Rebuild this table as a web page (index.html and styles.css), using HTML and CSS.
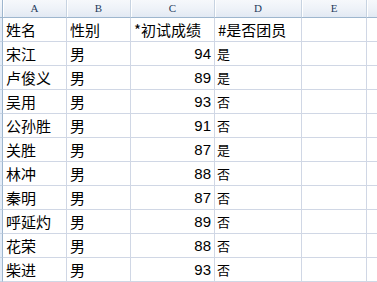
FILE: index.html
```html
<!DOCTYPE html>
<html lang="zh-CN">
<head>
<meta charset="utf-8">
<title>Sheet</title>
<link rel="stylesheet" href="styles.css">
</head>
<body>
<div class="sheet">
  <div class="corner"></div>
  <div class="colhead">A</div>
  <div class="colhead">B</div>
  <div class="colhead">C</div>
  <div class="colhead">D</div>
  <div class="colhead">E</div>
  <div class="colhead last"></div>

  <div class="rowhead"></div><div class="cell">姓名</div><div class="cell">性别</div><div class="cell">*初试成绩</div><div class="cell">#是否团员</div><div class="cell"></div><div class="cell"></div>
  <div class="rowhead"></div><div class="cell">宋江</div><div class="cell">男</div><div class="cell num">94</div><div class="cell yn">是</div><div class="cell"></div><div class="cell"></div>
  <div class="rowhead"></div><div class="cell">卢俊义</div><div class="cell">男</div><div class="cell num">89</div><div class="cell yn">是</div><div class="cell"></div><div class="cell"></div>
  <div class="rowhead"></div><div class="cell">吴用</div><div class="cell">男</div><div class="cell num">93</div><div class="cell yn">否</div><div class="cell"></div><div class="cell"></div>
  <div class="rowhead"></div><div class="cell">公孙胜</div><div class="cell">男</div><div class="cell num">91</div><div class="cell yn">否</div><div class="cell"></div><div class="cell"></div>
  <div class="rowhead"></div><div class="cell">关胜</div><div class="cell">男</div><div class="cell num">87</div><div class="cell yn">是</div><div class="cell"></div><div class="cell"></div>
  <div class="rowhead"></div><div class="cell">林冲</div><div class="cell">男</div><div class="cell num">88</div><div class="cell yn">否</div><div class="cell"></div><div class="cell"></div>
  <div class="rowhead"></div><div class="cell">秦明</div><div class="cell">男</div><div class="cell num">87</div><div class="cell yn">否</div><div class="cell"></div><div class="cell"></div>
  <div class="rowhead"></div><div class="cell">呼延灼</div><div class="cell">男</div><div class="cell num">89</div><div class="cell yn">否</div><div class="cell"></div><div class="cell"></div>
  <div class="rowhead"></div><div class="cell">花荣</div><div class="cell">男</div><div class="cell num">88</div><div class="cell yn">否</div><div class="cell"></div><div class="cell"></div>
  <div class="rowhead"></div><div class="cell">柴进</div><div class="cell">男</div><div class="cell num">93</div><div class="cell yn">否</div><div class="cell"></div><div class="cell"></div>
  <div class="rowhead"></div><div class="cell"></div><div class="cell"></div><div class="cell"></div><div class="cell"></div><div class="cell"></div><div class="cell"></div>
</div>
</body>
</html>
```

FILE: styles.css
```css
html, body {
  margin: 0;
  padding: 0;
  background: #ffffff;
  overflow: hidden;
}

.sheet {
  display: grid;
  grid-template-columns: 3px 64px 64px 84px 87px 65px 20px;
  grid-template-rows: 18px repeat(11, 24px);
  width: 377px;
  height: 282px;
  overflow: hidden;
  font-family: "Noto Sans CJK SC", "Liberation Sans", sans-serif;
  color: #000;
}

.corner {
  background: linear-gradient(#f5f8fc, #e3eaf4);
  border-right: 1px solid #9eb6ce;
  border-bottom: 1px solid #9eb6ce;
}

.colhead {
  background: linear-gradient(#f6f8fb 0%, #eef2f8 50%, #e2e9f3 100%);
  border-right: 1px solid #c7d3e1;
  box-shadow: inset 1px 0 0 #ffffff;
  border-bottom: 1px solid #9eb6ce;
  font-family: "Liberation Serif", serif;
  font-size: 11px;
  line-height: 17px;
  color: #1f3b5c;
  text-align: center;
}

.colhead.last {
  border-right: none;
}

.rowhead {
  background: #e4ecf7;
  border-right: 1px solid #9eb6ce;
  border-bottom: 1px solid #c5d2e2;
}

.cell {
  border-right: 1px solid #d0d7e5;
  border-bottom: 1px solid #d0d7e5;
  font-size: 15px;
  line-height: 23px;
  padding-left: 3px;
  white-space: nowrap;
  overflow: hidden;
}

.num {
  font-family: "Liberation Sans", sans-serif;
  text-align: right;
  padding-left: 0;
  padding-right: 3px;
}

.yn {
  font-size: 13px;
  padding-left: 2px;
}
```
